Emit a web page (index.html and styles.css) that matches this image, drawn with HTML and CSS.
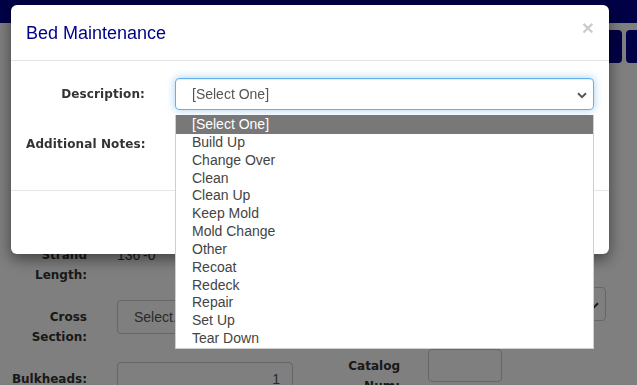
FILE: index.html
```html
<!DOCTYPE html>
<html lang="en">
<head>
    <meta charset="UTF-8">
    <title>Bed Maintenance</title>
    <link rel="stylesheet" href="styles.css">
</head>
<body>
    <div class="navbar"></div>
    <div class="toolbar">
        <button class="tool-btn"></button>
        <button class="tool-btn"></button>
    </div>

    <div class="page-form">
        <div class="form-col left-col">
            <div class="form-row">
                <label class="form-label">Strand Length:</label>
                <div class="static-value">136'-0</div>
            </div>
            <div class="form-row">
                <label class="form-label">Cross Section:</label>
                <div class="page-select wide">Select...</div>
            </div>
            <div class="form-row">
                <label class="form-label">Bulkheads:</label>
                <div class="page-input wide num">1</div>
            </div>
        </div>
        <div class="form-col right-col">
            <div class="form-row">
                <label class="form-label">Bed Type:</label>
                <div class="page-select full">
                    Select...
                    <svg class="chevron" width="10" height="7" viewBox="0 0 10 7"><path d="M1 1.2 L5 5.2 L9 1.2" fill="none" stroke="#333" stroke-width="2"/></svg>
                </div>
            </div>
            <div class="form-row">
                <label class="form-label">Catalog Num:</label>
                <div class="page-input short"></div>
            </div>
        </div>
    </div>

    <div class="backdrop"></div>

    <div class="modal">
        <div class="modal-dialog">
            <div class="modal-header">
                <h4 class="modal-title">Bed Maintenance</h4>
                <span class="close">&times;</span>
            </div>
            <div class="modal-body">
                <div class="modal-row">
                    <label class="modal-label">Description:</label>
                    <div class="select-wrap">
                        <div class="select-box">
                            [Select One]
                            <svg class="chevron" width="10" height="7" viewBox="0 0 10 7"><path d="M1 1.2 L5 5.2 L9 1.2" fill="none" stroke="#555" stroke-width="2"/></svg>
                        </div>
                        <ul class="option-list">
                            <li class="active">[Select One]</li>
                            <li>Build Up</li>
                            <li>Change Over</li>
                            <li>Clean</li>
                            <li>Clean Up</li>
                            <li>Keep Mold</li>
                            <li>Mold Change</li>
                            <li>Other</li>
                            <li>Recoat</li>
                            <li>Redeck</li>
                            <li>Repair</li>
                            <li>Set Up</li>
                            <li>Tear Down</li>
                        </ul>
                    </div>
                </div>
                <div class="modal-row notes-row">
                    <label class="modal-label">Additional Notes:</label>
                    <div class="notes-box"></div>
                </div>
            </div>
            <div class="modal-footer"></div>
        </div>
    </div>
</body>
</html>
```

FILE: styles.css
```css
/* General */
body {
    margin: 0;
    background-color: #ffffff;
    color: #333;
    font-family: 'Liberation Sans', Arial, sans-serif;
    font-size: 14px;
    overflow: hidden;
    height: 385px;
}

/* Page behind the dialog */
.navbar {
    height: 23px;
    background-color: #00008c;
}

.toolbar {
    display: flex;
    justify-content: flex-end;
    gap: 4px;
    margin-top: 7px;
    margin-right: -30px;
}

.tool-btn {
    width: 41px;
    height: 33px;
    background-color: #00008c;
    border: none;
    border-radius: 4px;
}

.page-form {
    display: flex;
    margin-top: 175px;
}

.form-col {
    display: flex;
    flex-direction: column;
    gap: 15px;
}

.left-col {
    width: 305px;
}

.right-col {
    padding-top: 49px;
}

.form-row {
    display: flex;
    align-items: flex-start;
}

.form-label {
    font-family: 'DejaVu Sans', Verdana, sans-serif;
    font-weight: bold;
    font-size: 12px;
    line-height: 20px;
    text-align: right;
    padding-top: 7px;
    box-sizing: border-box;
}

.left-col .form-label {
    width: 87px;
    margin-right: 30px;
}

.right-col .form-label {
    width: 95px;
    margin-right: 28px;
    padding-left: 40px;
}

.static-value {
    padding-top: 10px;
    line-height: 14px;
    color: #333;
}

.page-select, .page-input {
    position: relative;
    height: 34px;
    box-sizing: border-box;
    border: 1px solid #ccc;
    border-radius: 4px;
    padding: 0 16px;
    line-height: 32px;
    color: #555;
}

.wide {
    width: 176px;
}

.full {
    width: 178px;
}

.short {
    width: 74px;
    height: 33px;
}

.num {
    text-align: right;
    padding-right: 12px;
}

.page-select .chevron {
    position: absolute;
    right: 6px;
    top: 14px;
}

/* Backdrop */
.backdrop {
    position: fixed;
    inset: 0;
    background-color: rgba(0, 0, 0, 0.5);
}

/* Dialog */
.modal {
    position: fixed;
    inset: 0;
}

.modal-dialog {
    width: 598px;
    margin: 5px 0 0 11px;
    background-color: #fff;
    border-radius: 6px;
    box-shadow: 0 5px 15px rgba(0, 0, 0, 0.5);
}

.modal-header {
    display: flex;
    justify-content: space-between;
    align-items: center;
    height: 56px;
    padding: 0 15px;
    box-sizing: border-box;
    border-bottom: 1px solid #e5e5e5;
}

.modal-title {
    margin: 0;
    color: #00008b;
    font-size: 18px;
    font-weight: normal;
    padding-top: 2px;
}

.close {
    font-size: 21px;
    font-weight: bold;
    color: #000;
    opacity: 0.2;
    margin-top: -9px;
}

.modal-body {
    padding: 17px 15px 15px;
}

.modal-row {
    display: flex;
    align-items: center;
}

.modal-label {
    width: 119px;
    margin-right: 30px;
    text-align: right;
    white-space: nowrap;
    font-family: 'DejaVu Sans', Verdana, sans-serif;
    font-weight: bold;
    font-size: 12px;
    letter-spacing: 0.12px;
    color: #333;
}

.notes-row {
    align-items: flex-start;
    margin-top: 16px;
    height: 49px;
}

.notes-row .modal-label {
    padding-top: 11px;
}

.select-wrap {
    position: relative;
    flex: 1;
}

.select-box {
    position: relative;
    height: 32px;
    box-sizing: border-box;
    border: 1px solid #66afe9;
    border-radius: 4px;
    padding: 0 16px;
    line-height: 30px;
    color: #555;
    box-shadow: inset 0 1px 1px rgba(0, 0, 0, 0.075), 0 0 8px rgba(102, 175, 233, 0.6);
}

.select-box .chevron {
    position: absolute;
    right: 6px;
    top: 13px;
}

.notes-box {
    flex: 1;
    height: 49px;
}

/* Native option list, drawn open */
.option-list {
    position: absolute;
    top: 37px;
    left: 0;
    right: 0;
    margin: 0;
    padding: 0;
    list-style: none;
    background-color: #fff;
    border: 1px solid #cfcfcf;
    border-top: none;
    z-index: 5;
}

.option-list li {
    height: 17.83px;
    line-height: 17.83px;
    padding-left: 16px;
    color: #444;
    font-size: 14px;
}

.option-list li.active {
    height: 19px;
    line-height: 19px;
    background-color: #787878;
    color: #fff;
}

.modal-footer {
    height: 64px;
    border-top: 1px solid #e5e5e5;
    box-sizing: border-box;
}
```
